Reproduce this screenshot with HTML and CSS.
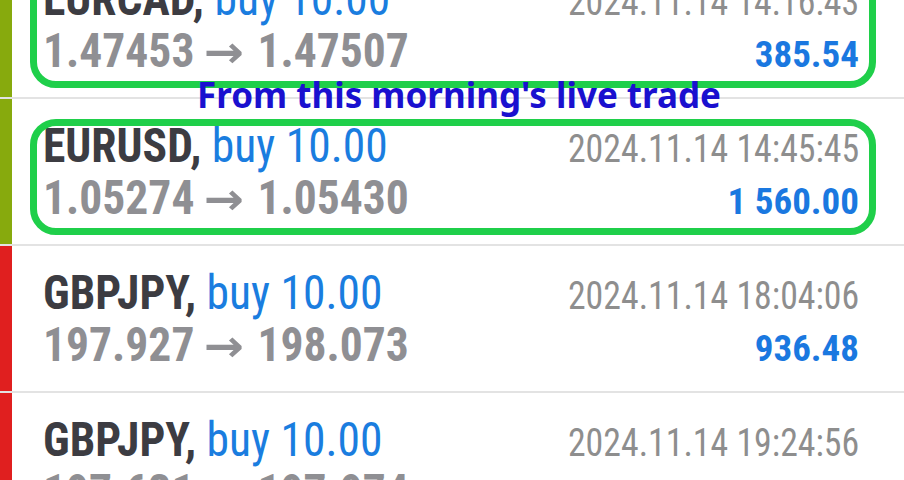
FILE: index.html
```html
<!DOCTYPE html>
<html lang="en">
<head>
<meta charset="utf-8">
<title>Trade history</title>
<link rel="stylesheet" href="styles.css">
</head>
<body>
<div class="screen">
  <ul class="trades">
    <li class="trade up marked">
      <div class="bar"></div>
      <div class="body">
        <div class="line top">
          <span class="deal"><b class="pair">EURCAD,</b> <span class="side">buy 10.00</span></span>
          <span class="time">2024.11.14 14:16:43</span>
        </div>
        <div class="line bottom">
          <span class="prices">1.47453 <span class="arrow">→</span> 1.47507</span>
          <span class="pnl">385.54</span>
        </div>
      </div>
    </li>
    <li class="trade up marked">
      <div class="bar"></div>
      <div class="body">
        <div class="line top">
          <span class="deal"><b class="pair">EURUSD,</b> <span class="side">buy 10.00</span></span>
          <span class="time">2024.11.14 14:45:45</span>
        </div>
        <div class="line bottom">
          <span class="prices">1.05274 <span class="arrow">→</span> 1.05430</span>
          <span class="pnl">1 560.00</span>
        </div>
      </div>
    </li>
    <li class="trade down">
      <div class="bar"></div>
      <div class="body">
        <div class="line top">
          <span class="deal"><b class="pair">GBPJPY,</b> <span class="side">buy 10.00</span></span>
          <span class="time">2024.11.14 18:04:06</span>
        </div>
        <div class="line bottom">
          <span class="prices">197.927 <span class="arrow">→</span> 198.073</span>
          <span class="pnl">936.48</span>
        </div>
      </div>
    </li>
    <li class="trade down">
      <div class="bar"></div>
      <div class="body">
        <div class="line top">
          <span class="deal"><b class="pair">GBPJPY,</b> <span class="side">buy 10.00</span></span>
          <span class="time">2024.11.14 19:24:56</span>
        </div>
        <div class="line bottom">
          <span class="prices">197.631 <span class="arrow">→</span> 197.974</span>
          <span class="pnl">1 361.27</span>
        </div>
      </div>
    </li>
  </ul>
  <div class="caption">From this morning's live trade</div>
</div>
</body>
</html>
```

FILE: styles.css
```css
html, body {
  margin: 0;
  padding: 0;
  background: #ffffff;
}

.screen {
  position: relative;
  width: 904px;
  height: 480px;
  overflow: hidden;
  background: #ffffff;
}

.trades {
  list-style: none;
  margin: -48px 0 0 0;
  padding: 0;
}

.trade {
  position: relative;
  display: flex;
  border-bottom: 2px solid #e3e3e3;
}

.trade .bar {
  width: 12px;
  flex: none;
}

.trade.up .bar { background: #87aa0d; }
.trade.down .bar { background: #e01f1f; }

.trade.marked::after {
  content: "";
  position: absolute;
  left: 30px;
  right: 28px;
  top: 20px;
  bottom: 9px;
  border: 7px solid #1fcf4a;
  border-radius: 26px;
  pointer-events: none;
}

.body {
  flex: 1;
  padding: 21px 45px 20px 31px;
  font-family: "Roboto Condensed", Roboto, sans-serif;
  font-stretch: 87.5%;
}

.line {
  display: flex;
  justify-content: space-between;
  align-items: baseline;
  font-size: 49px;
  line-height: 52px;
  white-space: nowrap;
}

/* the app uses a narrower cut of the condensed face */
.deal,
.prices {
  transform: scaleX(0.93);
  transform-origin: left center;
}

.pair {
  font-weight: 700;
  color: #3c3c42;
}

.side {
  color: #1a7ddf;
}

.time {
  font-size: 38.5px;
  line-height: 1;
  color: #8e8e8e;
  transform: scaleX(0.93);
  transform-origin: right center;
}

.prices {
  font-weight: 700;
  color: #8f8f93;
}

.arrow {
  display: inline-block;
  margin: 0 8px 0 4px;
  font-family: "DejaVu Sans", sans-serif;
  font-weight: 700;
  font-size: 44px;
  line-height: 1;
  transform: scaleX(1.3);
}

.pnl {
  font-size: 37px;
  line-height: 1;
  font-weight: 700;
  color: #1a78e0;
}

.caption {
  position: absolute;
  left: 197px;
  top: 75px;
  font-family: "Noto Sans", sans-serif;
  font-weight: 700;
  font-size: 35px;
  line-height: 40px;
  color: #1a10cf;
  white-space: nowrap;
}
```
